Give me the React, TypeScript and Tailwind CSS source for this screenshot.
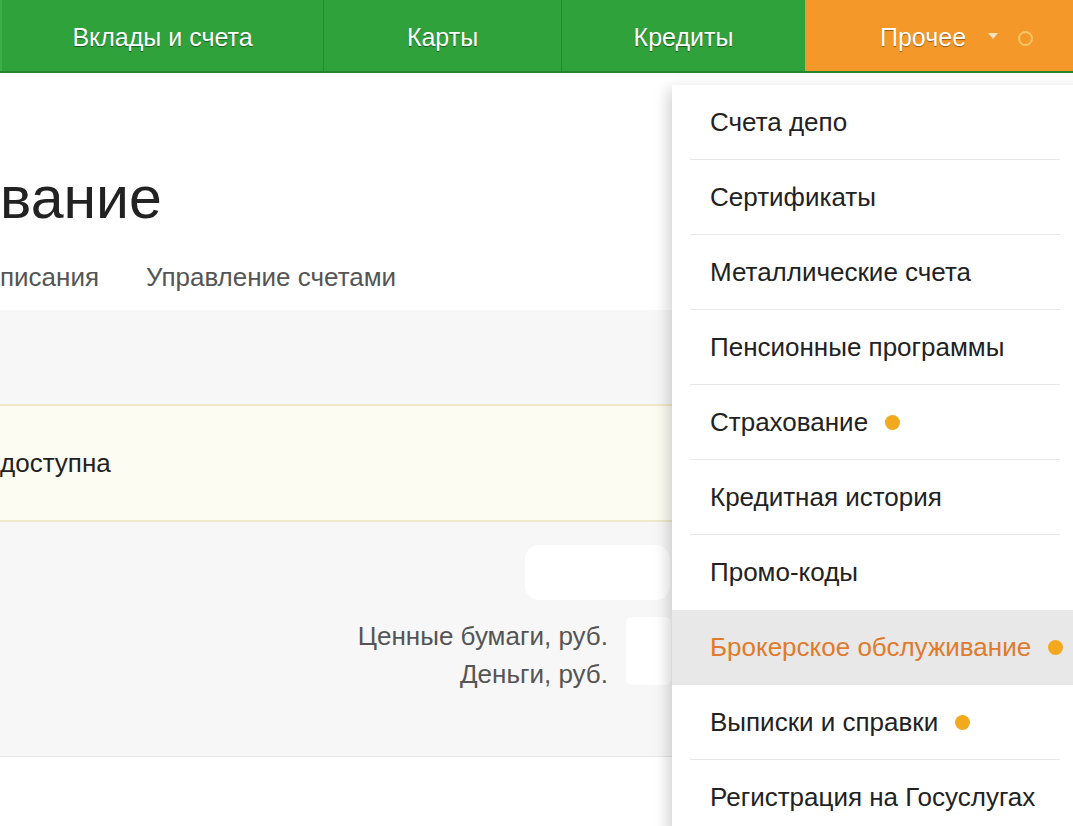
import React from "react";

const navItems = [
  { label: "Вклады и счета", w: "w-[323px]" },
  { label: "Карты", w: "w-[238px]" },
  { label: "Кредиты", w: "w-[244px]" },
];

const menu = [
  { label: "Счета депо" },
  { label: "Сертификаты" },
  { label: "Металлические счета" },
  { label: "Пенсионные программы" },
  { label: "Страхование", dot: true },
  { label: "Кредитная история" },
  { label: "Промо-коды", noLine: true },
  { label: "Брокерское обслуживание", dot: true, active: true, noLine: true },
  { label: "Выписки и справки", dot: true },
  { label: "Регистрация на Госуслугах" },
];

const Dot = () => <span className="ml-[17px] shrink-0 inline-block w-[15px] h-[15px] rounded-full bg-[#f2a91e]"></span>;

const App = () => {
  return (
    <div className="relative w-[1073px] h-[826px] overflow-hidden bg-white font-['Liberation_Sans',Arial,sans-serif]">
      {/* top nav */}
      <div className="flex h-[73px] border-b-2 border-[#25852e]">
        {navItems.map((n, i) => (
          <div
            key={n.label}
            className={`${n.w} flex items-center justify-center pt-[5px] bg-[#30a23b] text-white text-[25px] [text-shadow:0_1px_1px_rgba(0,0,0,0.45)] ${i > 0 ? "border-l border-[#27892f]" : "border-l-2 border-[#3bb046]"}`}
          >
            {n.label}
          </div>
        ))}
        <div className="flex-1 flex items-center pt-[5px] bg-[#f4982a] text-white text-[25px] pl-[75px] [text-shadow:0_1px_1px_rgba(0,0,0,0.4)]">
          Прочее
          <svg width="10" height="7" viewBox="0 0 10 7" className="ml-[22px] -mt-[4px]">
            <path d="M0 0h10L5 6z" fill="#fbe3bf" />
          </svg>
          <span className="ml-[20px] mt-[1px] inline-block w-[15px] h-[15px] rounded-full border-2 border-[#f8c662]"></span>
        </div>
      </div>

      {/* page body */}
      <div className="text-[59px] leading-[70px] text-[#222] mt-[90px]">вание</div>
      <div className="flex mt-[28px] text-[26px] leading-[32px] text-[#555]">
        <span>писания</span>
        <span className="ml-[47px]">Управление счетами</span>
      </div>

      <div className="mt-[17px] h-[447px] bg-[#f7f7f7] border-b border-[#e6e6e6] pt-[94px]">
        <div className="h-[118px] bg-[#fdfcf3] border-y-2 border-[#eeeac8] flex items-center text-[26px] text-[#222]">
          доступна
        </div>
        <div className="ml-[525px] mt-[23px] w-[145px] h-[55px] bg-white rounded-[14px]"></div>
        <div className="flex mt-[17px]">
          <div className="w-[608px] text-right text-[26px] leading-[38px] text-[#555]">
            <div>Ценные бумаги, руб.</div>
            <div>Деньги, руб.</div>
          </div>
          <div className="ml-[18px] w-[45px] h-[68px] bg-white rounded-[6px]"></div>
        </div>
      </div>

      {/* dropdown */}
      <div className="absolute top-[85px] left-[672px] w-[420px] bg-white shadow-[-4px_4px_14px_rgba(0,0,0,0.18)]">
        {menu.map((m) => (
          <div key={m.label} className={m.active ? "bg-[#e8e8e8]" : ""}>
            <div
              className={`h-[75px] ml-[18px] mr-[32px] pl-[20px] flex items-center whitespace-nowrap text-[26px] border-b ${m.noLine || m.active ? "border-transparent" : "border-[#e8e8e8]"} ${m.active ? "text-[#e07b2c]" : "text-[#222]"}`}
            >
              {m.label}
              {m.dot && <Dot />}
            </div>
          </div>
        ))}
      </div>
    </div>
  );
};

export default App;
